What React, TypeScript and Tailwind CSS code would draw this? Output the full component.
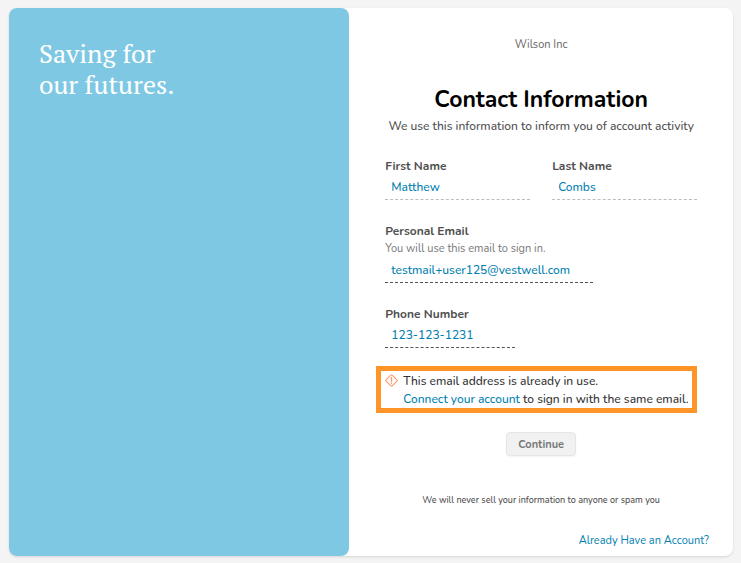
import type { ReactNode } from 'react';

type FieldProps = {
  id: string;
  label: string;
  value: string;
  type?: string;
  hint?: ReactNode;
  inputClass: string;
};

function Field({ id, label, value, type = 'text', hint, inputClass }: FieldProps) {
  return (
    <div className="flex flex-col items-start">
      <label htmlFor={id} className="text-[12px] leading-[18px] font-bold text-[#4f4f4f]">
        {label}
      </label>
      {hint && (
        <p id={`${id}-hint`} className="text-[11px] leading-[18px] text-[#777777]">
          {hint}
        </p>
      )}
      <input
        id={id}
        type={type}
        defaultValue={value}
        aria-describedby={hint ? `${id}-hint` : undefined}
        className={`h-[25px] border-b border-dashed bg-transparent px-[6px] text-[12px] font-medium text-[#0080b0] outline-none ${inputClass}`}
      />
    </div>
  );
}

export default function App() {
  return (
    <div className="min-h-screen bg-[#f4f4f4] pt-[8px] pr-[8px] pb-[7px] pl-[9px] font-['Nunito','Lato',sans-serif]">
      <main className="flex rounded-[8px] bg-white shadow-sm">
        <aside className="w-[47%] shrink-0 rounded-[8px] bg-[#7ec8e3] px-[30px] pt-[30px]">
          <p className="font-['PT_Serif','Liberation_Serif',serif] text-[26px] leading-[31px] text-white">
            Saving for
            <br />
            our futures.
          </p>
        </aside>
        <section className="flex grow flex-col px-[36px] pt-[28px] pb-[7px]">
          <p className="text-center text-[11px] leading-[18px] text-[#666666]">Wilson Inc</p>
          <h1 className="mt-[30px] text-center text-[23px] leading-[32px] font-bold text-black">
            Contact Information
          </h1>
          <p className="mt-[1px] text-center text-[12px] leading-[18px] font-medium whitespace-nowrap text-[#4f4f4f]">
            We use this information to inform you of account activity
          </p>
          <form className="mt-[22px] flex flex-col">
            <div className="flex flex-col gap-[22px]">
              <div className="grid grid-cols-2 gap-[22px]">
                <Field id="first" label="First Name" value="Matthew" inputClass="w-full border-[#bdbdbd]" />
                <Field id="last" label="Last Name" value="Combs" inputClass="w-full border-[#bdbdbd]" />
              </div>
              <Field
                id="email"
                type="email"
                label="Personal Email"
                value="testmail+user125@vestwell.com"
                hint="You will use this email to sign in."
                inputClass="w-2/3 border-[#555555]"
              />
              <Field
                id="phone"
                type="tel"
                label="Phone Number"
                value="123-123-1231"
                inputClass="w-[130px] border-[#555555]"
              />
            </div>
            <div
              role="alert"
              className="mt-[18px] -ml-[9px] flex gap-[5px] border-[5px] border-[#ff9429] pt-px pl-[4px] text-[12px] leading-[18px] font-medium whitespace-nowrap text-[#333333]"
            >
              <svg
                viewBox="0 0 14 14"
                className="mt-[2px] size-[13px] shrink-0"
                fill="none"
                stroke="#ff9468"
                strokeLinecap="round"
                strokeLinejoin="round"
                aria-hidden="true"
              >
                <path
                  d="M6.3 1.1Q7 .5 7.7 1.1L12.9 6.3Q13.5 7 12.9 7.7L7.7 12.9Q7 13.5 6.3 12.9L1.1 7.7Q.5 7 1.1 6.3Z"
                  strokeWidth="1.1"
                />
                <path d="M7 4v3.5M7 9.7v.2" strokeWidth="1.6" />
              </svg>
              <p>
                This email address is already in use.
                <br />
                <a href="#connect" className="text-[#0080b0]">
                  Connect your account
                </a>{' '}
                to sign in with the same email.
              </p>
            </div>
            <button
              type="submit"
              className="mt-[19px] h-[24px] w-[70px] self-center rounded-[4px] border border-[#e6e6e6] bg-[#f1f1f1] pt-px text-[11px] leading-[22px] font-bold text-[#777777] shadow-xs"
            >
              Continue
            </button>
          </form>
          <p className="mt-[36px] text-center text-[9px] leading-[16px] font-medium text-[#4f4f4f]">
            We will never sell your information to anyone or spam you
          </p>
          <a href="#signin" className="mt-[25px] -mr-[12px] self-end text-[11px] leading-[16px] text-[#0080b0]">
            Already Have an Account?
          </a>
        </section>
      </main>
    </div>
  );
}
